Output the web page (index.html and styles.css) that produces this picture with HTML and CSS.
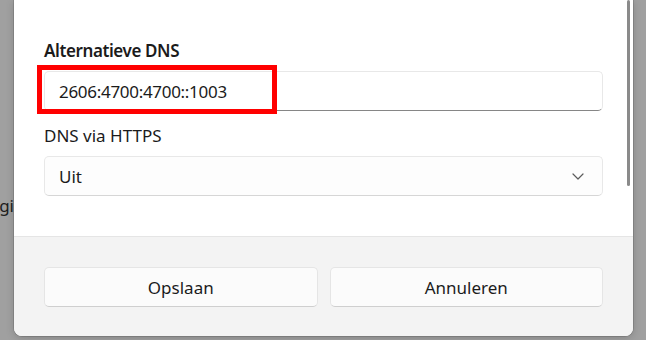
FILE: index.html
```html
<!DOCTYPE html>
<html lang="nl">
<head>
    <meta charset="UTF-8">
    <meta name="viewport" content="width=device-width, initial-scale=1.0">
    <title>DNS-instellingen bewerken</title>
    <link rel="stylesheet" href="styles.css">
</head>
<body>

    <div class="screen">
        <!-- Settings window behind the dialog, mostly covered -->
        <div class="behind">
            <span class="behind-text">gi</span>
        </div>

        <div class="dialog">
            <div class="content">
                <label class="field-label bold" for="alt-dns">Alternatieve DNS</label>
                <div class="field">
                    <input class="text-box" id="alt-dns" type="text" value="2606:4700:4700::1003">
                    <!-- Red highlight drawn over the field -->
                    <div class="highlight"></div>
                </div>

                <label class="field-label second">DNS via HTTPS</label>
                <div class="combo">
                    <span>Uit</span>
                    <svg class="chevron" width="12" height="7" viewBox="0 0 12 7">
                        <path d="M1 1 L6 6 L11 1" fill="none" stroke="#5c5c5c" stroke-width="1.2" stroke-linecap="round" stroke-linejoin="round"/>
                    </svg>
                </div>

                <div class="scroll-thumb"></div>
            </div>

            <div class="footer">
                <button class="dialog-button">Opslaan</button>
                <button class="dialog-button">Annuleren</button>
            </div>
        </div>

        <div class="behind right"></div>
    </div>

</body>
</html>
```

FILE: styles.css
```css
/* Basic Reset */
* {
    margin: 0;
    padding: 0;
    box-sizing: border-box;
}

body {
    font-family: 'Noto Sans', 'Open Sans', sans-serif;
    font-size: 17px;
    color: #1b1b1b;
    background-color: #a0a0a0;
    overflow: hidden;
}

.screen {
    display: flex;
    height: 340px;
}

/* Dimmed window behind */
.behind {
    width: 14px;
    flex: none;
    display: flex;
    justify-content: flex-end;
    overflow: hidden;
    padding-top: 193px;
}

.behind.right {
    width: 13px;
}

.behind-text {
    color: #1e1e1e;
    line-height: 25px;
    white-space: nowrap;
}

/* Dialog */
.dialog {
    width: 619px;
    height: 336px;
    flex: none;
    background-color: #ffffff;
    border-radius: 0 0 8px 8px;
    display: flex;
    flex-direction: column;
    overflow: hidden;
    position: relative;
    box-shadow: 0 0 0 1px rgba(0, 0, 0, 0.12), 0 2px 8px rgba(0, 0, 0, 0.18);
}

.content {
    flex: 1;
    padding: 38px 30px 0;
}

.field-label {
    display: block;
    line-height: 25px;
    margin-bottom: 8px;
}

.field-label.bold {
    font-weight: 600;
    letter-spacing: -0.4px;
}

.field-label.second {
    margin-top: 12px;
}

.field {
    position: relative;
}

.text-box {
    display: block;
    width: 100%;
    height: 40px;
    padding: 0 14px;
    font-family: inherit;
    font-size: 17px;
    letter-spacing: -0.3px;
    color: #1b1b1b;
    background-color: #ffffff;
    border: 1px solid #e8e8e8;
    border-bottom-color: #868686;
    border-radius: 5px;
    outline: none;
}

.highlight {
    position: absolute;
    left: -7px;
    top: -6px;
    width: 240px;
    height: 49px;
    border: 5px solid #ff0000;
}

.combo {
    height: 40px;
    padding: 0 18px 0 14px;
    display: flex;
    align-items: center;
    justify-content: space-between;
    background-color: #fdfdfd;
    border: 1px solid #e8e8e8;
    border-bottom-color: #d6d6d6;
    border-radius: 5px;
}

.scroll-thumb {
    position: absolute;
    right: 3px;
    top: 0;
    width: 3px;
    height: 186px;
    border-radius: 2px;
    background-color: #8a8a8a;
}

/* Footer with buttons */
.footer {
    height: 100px;
    flex: none;
    background-color: #f3f3f3;
    border-top: 1px solid #e5e5e5;
    padding: 30px 30px 0;
    display: grid;
    grid-template-columns: 1fr 1fr;
    gap: 12px;
    align-items: start;
}

.dialog-button {
    height: 40px;
    font-family: inherit;
    font-size: 17px;
    color: #1b1b1b;
    background-color: #fbfbfb;
    border: 1px solid #e5e5e5;
    border-bottom-color: #cfcfcf;
    border-radius: 5px;
    cursor: pointer;
}
```
